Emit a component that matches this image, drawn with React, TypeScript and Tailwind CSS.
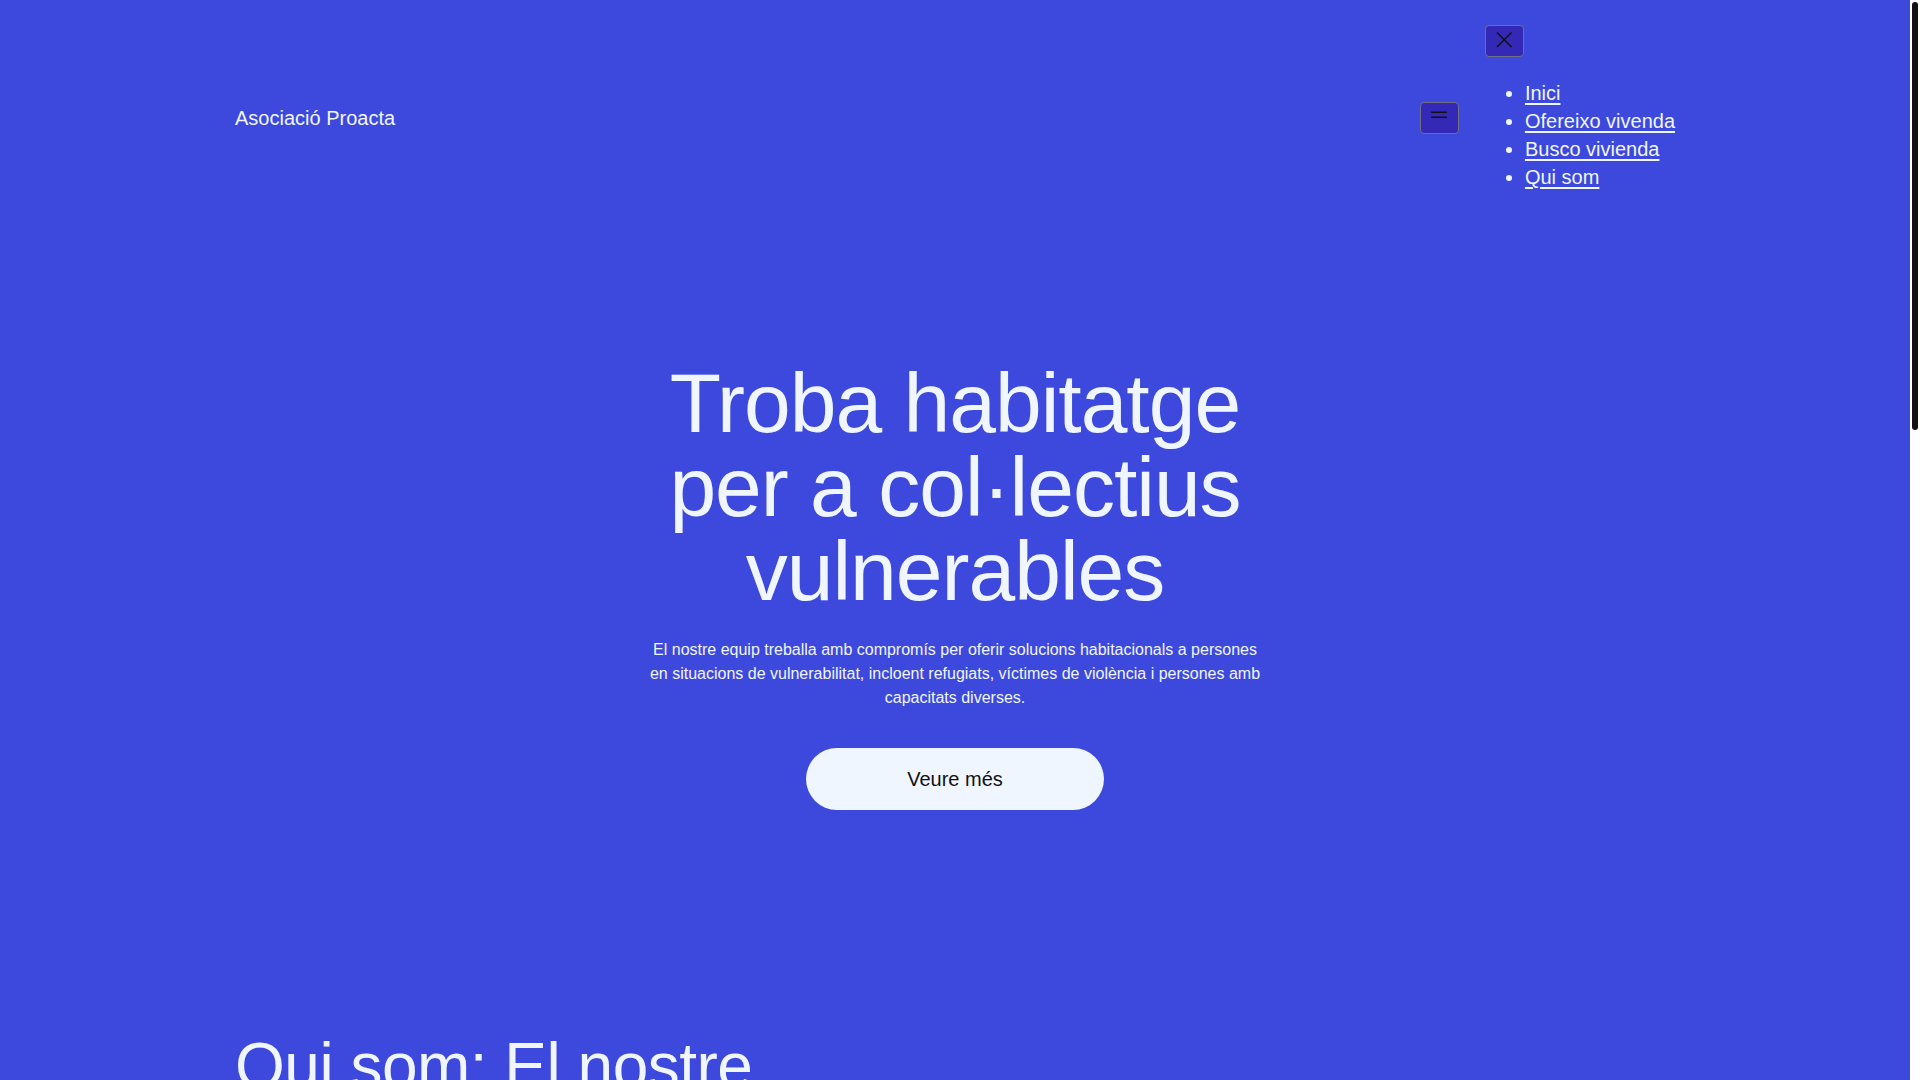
import { useState } from 'react';

const links = ['Inici', 'Ofereixo vivenda', 'Busco vivienda', 'Qui som'];

function MenuIcon() {
  return (
    <svg width="24" height="24" viewBox="0 0 24 24" fill="none" stroke="#111" strokeWidth="1.5">
      <path d="M4 6.25h16M4 11.25h16" />
    </svg>
  );
}

function CloseIcon() {
  return (
    <svg width="24" height="24" viewBox="0 0 24 24" fill="none" stroke="#111" strokeWidth="1.5">
      <path d="M5 3.5l14.5 14.5M19.5 3.5L5 18" />
    </svg>
  );
}

export default function App() {
  const [open, setOpen] = useState(true);

  return (
    <div className="h-screen flex overflow-hidden bg-white">
      <div className="flex-1 h-full overflow-hidden">
        <div className="min-h-[2725px] bg-[#3d48dc] text-[#eff6ff] font-['Liberation_Sans',Arial,sans-serif]">
          <header className="max-w-[1440px] mx-auto flex justify-between items-start pt-[25px]">
            <a href="#" className="mt-[79px] text-[20px] leading-[28px]">
              Asociació Proacta
            </a>
            <nav className="flex items-start gap-[26px]">
              <button
                onClick={() => setOpen(true)}
                className="mt-[77px] w-[39px] h-[32px] flex items-center justify-center rounded-[4px] border border-[#6f6f86] bg-[#3329b6]"
                aria-label="Obre el menú"
              >
                <MenuIcon />
              </button>
              {open && (
                <div className="flex flex-col">
                  <button
                    onClick={() => setOpen(false)}
                    className="w-[39px] h-[32px] flex items-center justify-center rounded-[4px] border border-[#6f6f86] bg-[#3329b6]"
                    aria-label="Tanca el menú"
                  >
                    <CloseIcon />
                  </button>
                  <ul className="mt-[22px] list-disc pl-[40px] text-[20px] leading-[28px]">
                    {links.map((l) => (
                      <li key={l}>
                        <a href="#" className="underline underline-offset-[3px]">
                          {l}
                        </a>
                      </li>
                    ))}
                  </ul>
                </div>
              )}
            </nav>
          </header>

          <main>
            <section className="pt-[170px] pb-[224px] flex flex-col items-center text-center">
              <h1 className="max-w-[640px] text-[84px] leading-[84px] tracking-[-1px]">
                Troba habitatge per a col·lectius vulnerables
              </h1>
              <p className="mt-[25px] w-[616px] text-[16px] leading-[24px]">
                El nostre equip treballa amb compromís per oferir solucions habitacionals a persones en
                situacions de vulnerabilitat, incloent refugiats, víctimes de violència i persones amb
                capacitats diverses.
              </p>
              <a
                href="#"
                className="mt-[38px] w-[298px] h-[62px] flex items-center justify-center rounded-full bg-[#eff6ff] text-[#111] text-[20px]"
              >
                Veure més
              </a>
            </section>

            <section className="max-w-[1440px] mx-auto pb-[160px] flex flex-col gap-10">
              <h2 className="max-w-[640px] text-[64px] leading-[64px] tracking-[-0.5px]">
                Qui som: El nostre compromís amb l'habitatge
              </h2>
              <div className="max-w-[720px] flex flex-col gap-6 text-[18px] leading-[28px]">
                <p>
                  Som una associació sense ànim de lucre que connecta propietaris amb persones que
                  necessiten un habitatge digne i segur.
                </p>
                <p>
                  Acompanyem cada procés de principi a fi, amb suport social, mediació i seguiment
                  perquè la convivència funcioni.
                </p>
              </div>
            </section>

            <section className="max-w-[1440px] mx-auto pb-[200px] grid grid-cols-2 gap-16">
              <div className="flex flex-col gap-4">
                <h3 className="text-[40px] leading-[48px]">Ofereixo vivenda</h3>
                <p className="text-[18px] leading-[28px]">
                  Si tens un habitatge disponible, t'ajudem a llogar-lo amb garanties i a generar un
                  impacte social positiu.
                </p>
              </div>
              <div className="flex flex-col gap-4">
                <h3 className="text-[40px] leading-[48px]">Busco vivienda</h3>
                <p className="text-[18px] leading-[28px]">
                  Si estàs buscant un lloc on viure, contacta amb nosaltres i estudiarem la teva
                  situació.
                </p>
              </div>
            </section>
          </main>

          <footer className="max-w-[1440px] mx-auto pb-[120px] text-[16px] leading-[24px]">
            Asociació Proacta
          </footer>
        </div>
      </div>

      {/* scrollbar */}
      <div className="w-[10px] shrink-0 bg-white px-[2px] pt-[2px]">
        <div className="h-[428px] rounded-t-[3px] rounded-b-[3px] bg-[#111]" />
      </div>
    </div>
  );
}
